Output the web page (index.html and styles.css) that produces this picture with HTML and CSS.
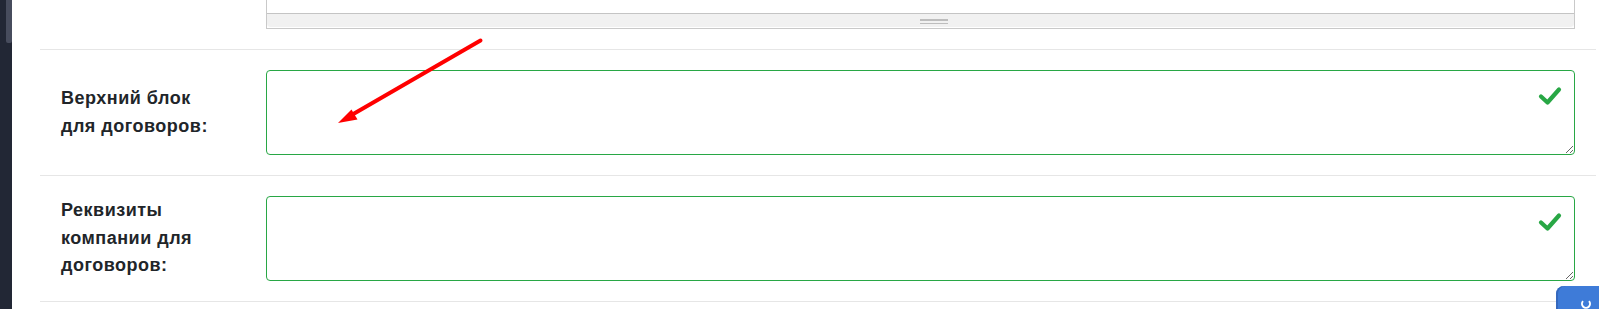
FILE: index.html
```html
<!DOCTYPE html>
<html lang="ru">
<head>
<meta charset="utf-8">
<link rel="stylesheet" href="styles.css">
</head>
<body>
<div class="layout">
  <aside class="sidebar"><div class="sidebar-thumb"></div></aside>
  <main class="content">
    <div class="row row-top">
      <div class="label-col"></div>
      <div class="field-col">
        <div class="editor">
          <div class="editor-body"></div>
          <div class="editor-status"><span class="grip"></span></div>
        </div>
      </div>
    </div>
    <div class="row">
      <div class="label-col"><label class="label">Верхний блок для договоров:</label></div>
      <div class="field-col">
        <div class="valid-wrap">
          <textarea class="valid-input"></textarea>
          <svg class="check" viewBox="0 0 24 20" width="24" height="20"><polyline points="3,10.5 9.5,16.5 21,3.5" fill="none" stroke="#28a745" stroke-width="4.2" stroke-linecap="round" stroke-linejoin="round"/></svg>
        </div>
      </div>
    </div>
    <div class="row">
      <div class="label-col"><label class="label">Реквизиты компании для договоров:</label></div>
      <div class="field-col">
        <div class="valid-wrap">
          <textarea class="valid-input"></textarea>
          <svg class="check" viewBox="0 0 24 20" width="24" height="20"><polyline points="3,10.5 9.5,16.5 21,3.5" fill="none" stroke="#28a745" stroke-width="4.2" stroke-linecap="round" stroke-linejoin="round"/></svg>
        </div>
      </div>
    </div>
    <div class="row row-end"></div>
  </main>
</div>
<svg class="arrow" width="1599" height="309" viewBox="0 0 1599 309">
  <line x1="480.5" y1="40.5" x2="349" y2="116.5" stroke="#ff0000" stroke-width="4" stroke-linecap="round"/>
  <polygon points="338,123 351.5,109.5 357.5,119.5" fill="#ff0000"/>
</svg>
<div class="float-btn">
  <svg width="12" height="12" viewBox="0 0 12 12"><path d="M3 3.2 A4 4 0 1 0 9 3.2" fill="none" stroke="#fff" stroke-width="2"/></svg>
</div>
</body>
</html>
```
FILE: styles.css
```css
html, body {
  margin: 0;
  padding: 0;
  background: #fff;
  height: 100%;
  overflow: hidden;
}
body {
  font-family: "Liberation Sans", Arial, sans-serif;
  color: #212529;
}
.layout {
  display: flex;
  min-height: 100%;
}
.sidebar {
  flex: 0 0 12px;
  background: #222735;
  position: relative;
}
.sidebar-thumb {
  margin-left: 6px;
  width: 6px;
  height: 43px;
  background: #474c5d;
  border-radius: 0 0 2px 2px;
}
.content {
  flex: 1;
  padding: 0 3px 0 28px;
}
.row {
  display: flex;
  border-top: 1px solid #e6e6e6;
  padding: 20px 0;
}
.row-top {
  border-top: none;
  padding: 0 0 20px;
}
.row-end {
  padding: 0;
  height: 20px;
}
.label-col {
  flex: 0 0 226px;
  box-sizing: border-box;
  padding: 0 44px 0 21px;
  display: flex;
  align-items: center;
}
.label {
  font-weight: bold;
  font-size: 18px;
  letter-spacing: 0.5px;
  line-height: 27.5px;
}
.field-col {
  flex: 1;
  padding-right: 21px;
}
.editor {
  border: 1px solid #c9c9c9;
  border-top: none;
}
.editor-body {
  height: 13px;
  background: #fff;
}
.editor-status {
  height: 13px;
  border-top: 1px solid #c4c4c4;
  border-bottom: 1px solid #fff;
  background: #f1f1f1;
  border-radius: 0 0 4px 4px;
  display: flex;
  justify-content: center;
  align-items: center;
}
.grip {
  width: 28px;
  border-top: 1px solid #bdbdbd;
  border-bottom: 1px solid #bdbdbd;
  margin-left: 26px;
  margin-top: 1px;
  box-sizing: content-box;
  height: 1px;
  padding-top: 2px;
  background: linear-gradient(#bdbdbd, #bdbdbd) 0 0 / 100% 1px no-repeat;
}
.valid-wrap {
  position: relative;
}
.valid-input {
  display: block;
  width: 100%;
  box-sizing: border-box;
  height: 85px;
  border: 1px solid #28a745;
  border-radius: 4px;
  resize: vertical;
  font-family: inherit;
  font-size: 16px;
  padding: 6px 12px;
  outline: none;
  margin: 0;
}
.check {
  position: absolute;
  top: 16px;
  right: 13px;
}
.arrow {
  position: fixed;
  left: 0;
  top: 0;
  pointer-events: none;
}
.float-btn {
  position: fixed;
  left: 1556px;
  top: 286px;
  width: 60px;
  height: 40px;
  background: #3e7bd8;
  border-radius: 8px 0 0 0;
  box-shadow: inset 2px 0 0 #3568bd;
  display: flex;
  padding: 12px 0 0 24px;
  box-sizing: border-box;
}
```
